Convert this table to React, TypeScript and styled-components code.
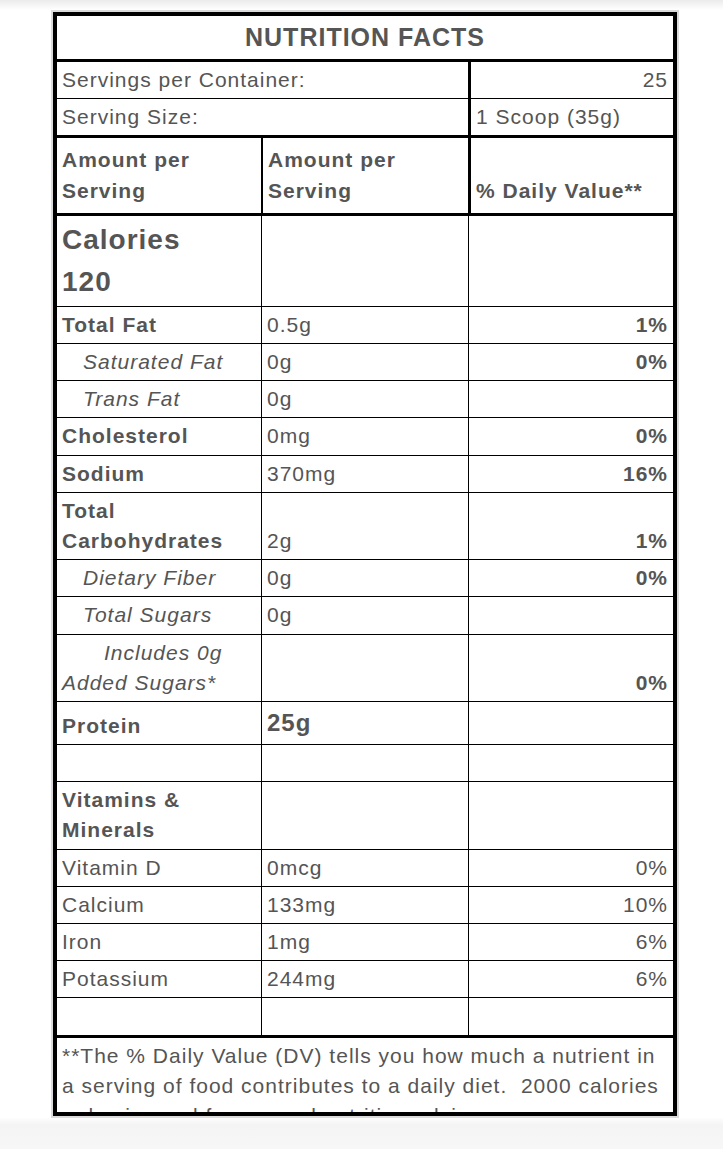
import React from "react";
import styled, { createGlobalStyle, css } from "styled-components";

const GlobalStyle = createGlobalStyle`
  html, body { margin: 0; padding: 0; }
  body {
    background: #fff;
    font-family: "Liberation Sans", Arial, Helvetica, sans-serif;
  }
`;

const Page = styled.div`
  min-height: 100vh;
  display: flex;
  flex-direction: column;
  background: linear-gradient(to bottom, #ebebeb 0, #f5f5f5 5px, #fff 10px) no-repeat;
  background-size: 100% 10px;
`;

const Stage = styled.div`
  padding: 12px 0 2px 53px;
`;

const Floor = styled.div`
  flex: 1;
  background: linear-gradient(to bottom, #fdfdfd 0, #f4f4f4 7px, #f7f7f7 100%);
`;

const Label = styled.section`
  box-sizing: border-box;
  width: 624px;
  height: 1104px;
  border: 4px solid #000;
  box-shadow: 0 0 0 2px #dadada;
  overflow: hidden;
  color: #555;
  font-size: 21px;
  line-height: 30.2px;
  letter-spacing: 1px;
`;

const Row = styled.div<{ $cols: string; $rule: number }>`
  display: grid;
  grid-template-columns: ${(p) => p.$cols};
  border-bottom: ${(p) => p.$rule}px solid #000;
`;

const Title = styled.h1`
  margin: 0;
  padding: 0;
  font-size: 25px;
  line-height: 43px;
  font-weight: 700;
  text-align: center;
  letter-spacing: 1px;
`;

type CellProps = {
  $rule?: number;
  $align?: "left" | "right";
  $bold?: boolean;
  $italic?: boolean;
  $indent?: number;
  $size?: number;
  $lh?: number;
  $pt?: number;
  $pb?: number;
};

const Cell = styled.div<CellProps>`
  box-sizing: border-box;
  min-width: 0;
  display: flex;
  flex-direction: column;
  justify-content: flex-end;
  padding: ${(p) => p.$pt ?? 3}px 5px ${(p) => p.$pb ?? 3}px 5px;
  border-right: ${(p) => (p.$rule ? `${p.$rule}px solid #000` : "none")};
  text-align: ${(p) => p.$align ?? "left"};
  font-weight: ${(p) => (p.$bold ? 700 : 400)};
  font-style: ${(p) => (p.$italic ? "italic" : "normal")};
  text-indent: ${(p) => (p.$indent ? `${p.$indent}em` : "0")};
  ${(p) =>
    p.$size &&
    css`
      font-size: ${p.$size}px;
      line-height: ${p.$lh}px;
    `}
`;

const Line = styled.span`
  display: block;
`;

const Note = styled.p`
  margin: 0;
  padding: 3px 5px;
`;

type Nutrient = {
  label: string;
  amount: string;
  dv: string;
  labelStyle?: "bold" | "italic" | "plain";
  indent?: number;
  dvBold?: boolean;
  bigAmount?: boolean;
  rule?: number;
};

const BODY_COLS = "205px 207px 1fr";
const nbsp = "\u00a0";

const nutrients: Nutrient[] = [
  { label: "Total Fat", labelStyle: "bold", amount: "0.5g", dv: "1%", dvBold: true },
  { label: "Saturated Fat", labelStyle: "italic", indent: 1, amount: "0g", dv: "0%", dvBold: true },
  { label: "Trans Fat", labelStyle: "italic", indent: 1, amount: "0g", dv: "" },
  { label: "Cholesterol", labelStyle: "bold", amount: "0mg", dv: "0%", dvBold: true },
  { label: "Sodium", labelStyle: "bold", amount: "370mg", dv: "16%", dvBold: true },
  { label: "Total Carbohydrates", labelStyle: "bold", amount: "2g", dv: "1%", dvBold: true },
  { label: "Dietary Fiber", labelStyle: "italic", indent: 1, amount: "0g", dv: "0%", dvBold: true },
  { label: "Total Sugars", labelStyle: "italic", indent: 1, amount: "0g", dv: "" },
  { label: "Includes 0g Added Sugars*", labelStyle: "italic", indent: 2, amount: "", dv: "0%", dvBold: true },
  { label: "Protein", labelStyle: "bold", amount: "25g", dv: "", bigAmount: true },
  { label: "", amount: "", dv: "" },
  { label: "Vitamins & Minerals", labelStyle: "bold", amount: "", dv: "" },
  { label: "Vitamin D", amount: "0mcg", dv: "0%" },
  { label: "Calcium", amount: "133mg", dv: "10%" },
  { label: "Iron", amount: "1mg", dv: "6%" },
  { label: "Potassium", amount: "244mg", dv: "6%" },
  { label: "", amount: "", dv: "", rule: 3 },
];

function NutrientRow({ n }: { n: Nutrient }) {
  return (
    <Row $cols={BODY_COLS} $rule={n.rule ?? 1}>
      <Cell
        $rule={1}
        $bold={n.labelStyle === "bold"}
        $italic={n.labelStyle === "italic"}
        $indent={n.indent}
      >
        {n.label || nbsp}
      </Cell>
      <Cell
        $rule={1}
        $bold={n.bigAmount}
        $size={n.bigAmount ? 24 : undefined}
        $lh={n.bigAmount ? 36 : undefined}
      >
        {n.amount || nbsp}
      </Cell>
      <Cell $align="right" $bold={n.dvBold}>
        {n.dv || nbsp}
      </Cell>
    </Row>
  );
}

export default function App() {
  return (
    <>
      <GlobalStyle />
      <Page>
        <Stage>
          <Label>
            <Row $cols="1fr" $rule={3}>
              <Title>NUTRITION FACTS</Title>
            </Row>
            <Row $cols="414px 1fr" $rule={1}>
              <Cell $rule={3}>Servings per Container:</Cell>
              <Cell $align="right">25</Cell>
            </Row>
            <Row $cols="414px 1fr" $rule={3}>
              <Cell $rule={3}>Serving Size:</Cell>
              <Cell>1 Scoop (35g)</Cell>
            </Row>
            <Row $cols="206px 208px 1fr" $rule={3}>
              <Cell $rule={2} $bold $pt={7} $pb={7}>
                Amount per Serving
              </Cell>
              <Cell $rule={3} $bold $pt={7} $pb={7}>
                Amount per Serving
              </Cell>
              <Cell $bold $pt={7} $pb={7}>
                % Daily Value**
              </Cell>
            </Row>
            <Row $cols={BODY_COLS} $rule={1}>
              <Cell $rule={1} $bold $size={28} $lh={42}>
                <Line>Calories</Line>
                <Line>120</Line>
              </Cell>
              <Cell $rule={1}>{nbsp}</Cell>
              <Cell>{nbsp}</Cell>
            </Row>
            {nutrients.map((n, i) => (
              <NutrientRow key={i} n={n} />
            ))}
            <Note>
              **The % Daily Value (DV) tells you how much a nutrient in a serving of food
              contributes to a daily diet.{nbsp} 2000 calories a day is used for general
              nutrition advice.
            </Note>
          </Label>
        </Stage>
        <Floor />
      </Page>
    </>
  );
}
